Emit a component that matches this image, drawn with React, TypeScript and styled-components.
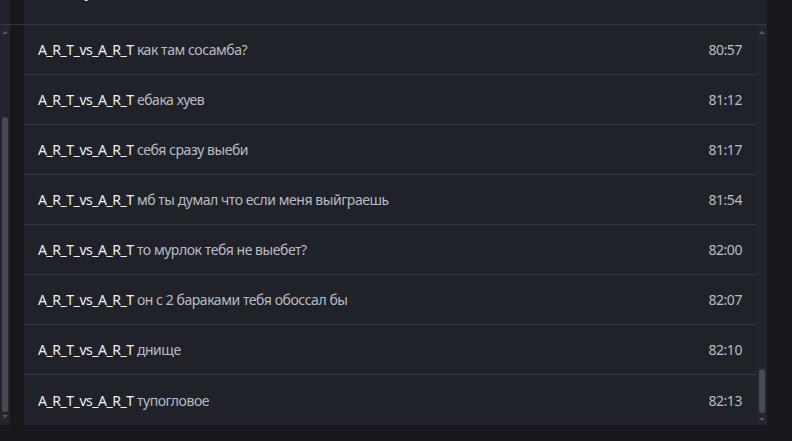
import React from "react";
import styled, { createGlobalStyle } from "styled-components";

const Global = createGlobalStyle`
  html, body { margin: 0; padding: 0; background: #17181c; }
  body { font-family: "Noto Sans", "Open Sans", sans-serif; overflow: hidden; }
  * { box-sizing: border-box; }
`;

const Page = styled.div`
  display: flex;
  width: 792px;
  height: 441px;
  gap: 14px;
  align-items: flex-start;
`;

const SidePanel = styled.div`
  width: 10px;
  height: 425px;
  background: #202229;
  display: flex;
  flex-direction: column;
`;

const Panel = styled.div`
  width: 743px;
  height: 425px;
  background: #202229;
  display: flex;
  flex-direction: column;
`;

const Header = styled.div`
  height: 25px;
  flex: none;
  border-bottom: 1px solid #34363d;
  overflow: hidden;
  display: flex;
  align-items: flex-end;
  padding-left: 38px;
`;

const Title = styled.h2`
  margin: 0 0 21px 0;
  font-size: 17px;
  font-weight: 700;
  color: #f2f2f2;
  line-height: 24px;
  font-family: "Noto Sans", sans-serif;
`;

const Body = styled.div`
  flex: 1;
  display: flex;
  min-height: 0;
`;

const List = styled.div`
  flex: 1;
  display: flex;
  flex-direction: column;
`;

const Row = styled.div<{ $last?: boolean }>`
  height: 50px;
  flex: none;
  display: flex;
  align-items: center;
  justify-content: space-between;
  padding: 0 15px 0 14px;
  border-bottom: ${(p) => (p.$last ? "none" : "1px solid #34363d")};
  font-size: 14px;
  letter-spacing: -0.45px;
`;

const Text = styled.div`
  white-space: nowrap;
`;

const Name = styled.span`
  color: #f1f1f1;
`;

const Msg = styled.span`
  color: #b9bcc2;
`;

const Time = styled.span`
  color: #b9bcc2;
`;

const Scroll = styled.div`
  width: 10px;
  flex: none;
  background: #23252c;
  display: flex;
  flex-direction: column;
  align-items: center;
  padding: 6px 0 4px;
`;

const Arrow = styled.div<{ $down?: boolean }>`
  width: 0;
  height: 0;
  border-left: 3px solid transparent;
  border-right: 3px solid transparent;
  ${(p) =>
    p.$down
      ? "border-top: 3px solid #575a61;"
      : "border-bottom: 3px solid #575a61;"}
`;

const Track = styled.div<{ $top: number }>`
  flex: 1;
  width: 6px;
  margin: 3px 0;
  display: flex;
  flex-direction: column;
  padding-top: ${(p) => p.$top}px;
`;

const Thumb = styled.div<{ $size: number }>`
  height: ${(p) => p.$size}px;
  width: 6px;
  border-radius: 3px;
  background: #494b52;
`;

const rows = [
  ["как там сосамба?", "80:57"],
  ["ебака хуев", "81:12"],
  ["себя сразу выеби", "81:17"],
  ["мб ты думал что если меня выйграешь", "81:54"],
  ["то мурлок тебя не выебет?", "82:00"],
  ["он с 2 бараками тебя обоссал бы", "82:07"],
  ["днище", "82:10"],
  ["тупогловое", "82:13"],
];

export default function App() {
  return (
    <>
      <Global />
      <Page>
        <SidePanel>
          <Header />
          <Scroll>
            <Arrow />
            <Track $top={80}>
              <Thumb $size={295} />
            </Track>
            <Arrow $down />
          </Scroll>
        </SidePanel>
        <Panel>
          <Header>
            <Title>Игровой чат</Title>
          </Header>
          <Body>
            <List>
              {rows.map(([m, t], i) => (
                <Row key={i} $last={i === rows.length - 1}>
                  <Text>
                    <Name>A_R_T_vs_A_R_T</Name> <Msg>{m}</Msg>
                  </Text>
                  <Time>{t}</Time>
                </Row>
              ))}
            </List>
            <Scroll>
              <Arrow />
              <Track $top={332}>
                <Thumb $size={44} />
              </Track>
              <Arrow $down />
            </Scroll>
          </Body>
        </Panel>
      </Page>
    </>
  );
}
